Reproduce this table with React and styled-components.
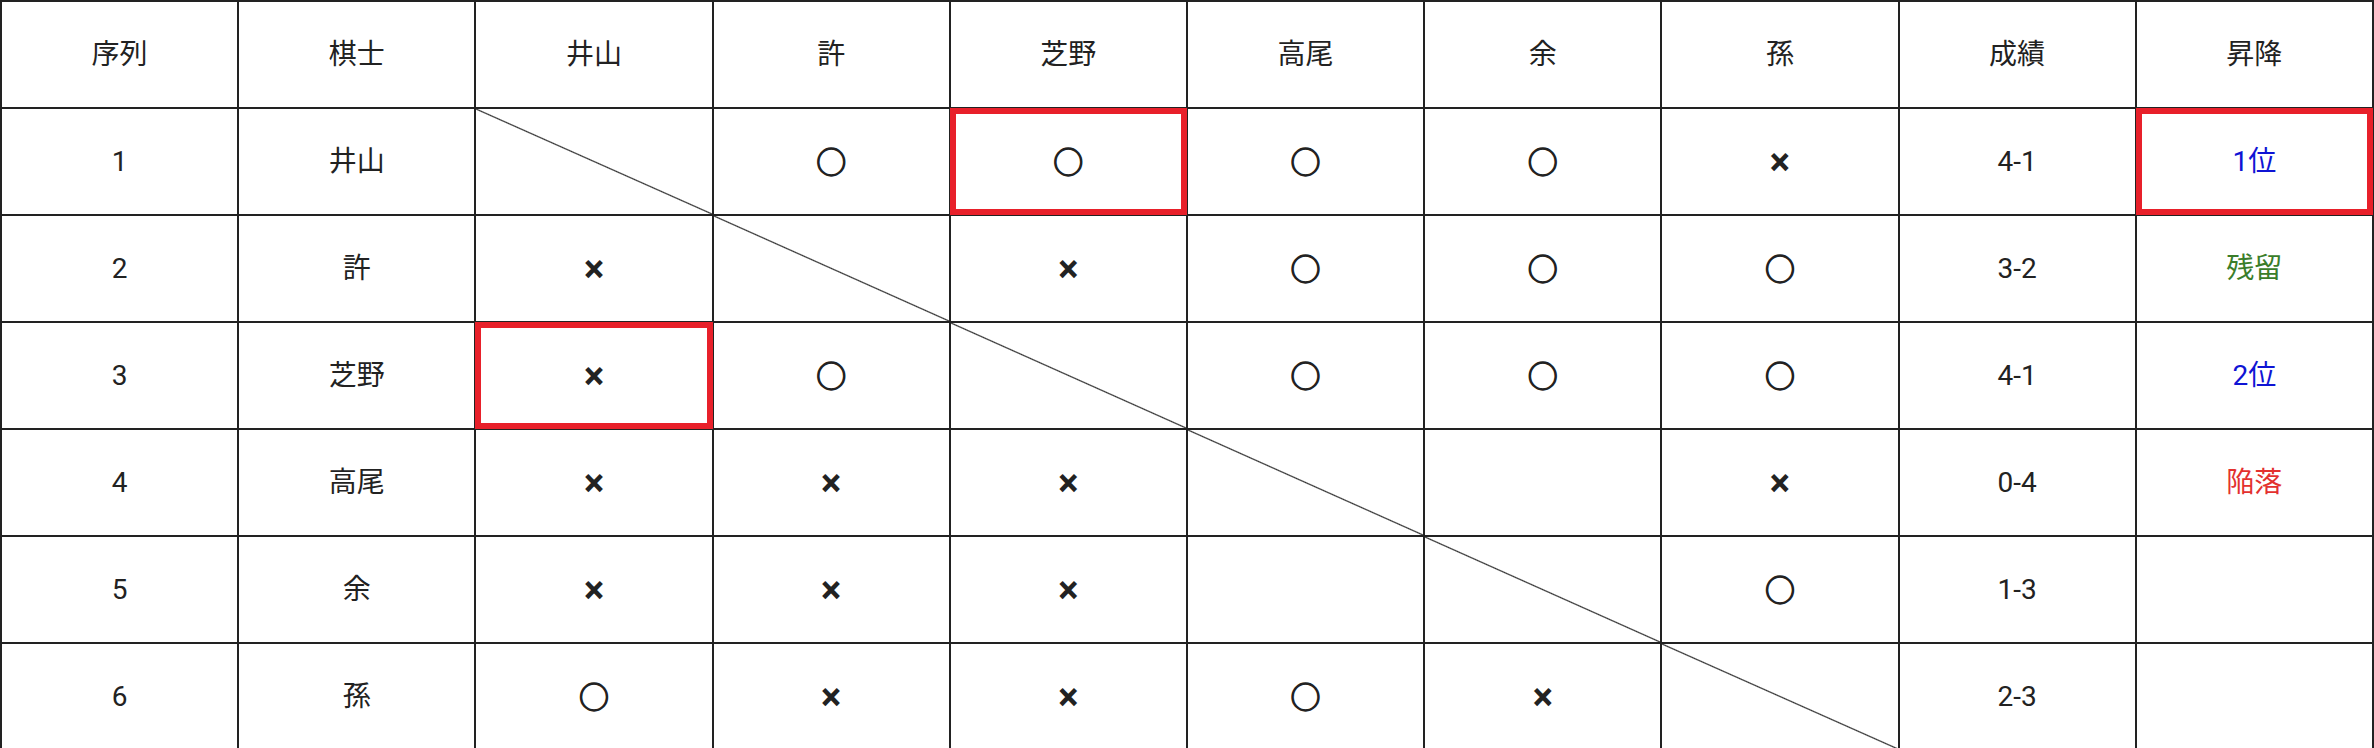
import React from "react";
import styled, { createGlobalStyle, css } from "styled-components";

const GlobalStyle = createGlobalStyle`
  html, body {
    margin: 0;
    padding: 0;
    background: #fff;
  }
  body {
    font-family: Roboto, "Noto Sans CJK JP", "Noto Sans CJK SC", sans-serif;
    color: #222;
  }
`;

const COLORS = {
  blue: "#0f14d4",
  green: "#3a7d2a",
  red: "#e3312f",
};

const players = ["井山", "許", "芝野", "高尾", "余", "孫"];

// each row: results vs players, score, status
const rows = [
  { results: ["", "○", "○", "○", "○", "×"], score: "4-1", status: "1位", tone: "blue" },
  { results: ["×", "", "×", "○", "○", "○"], score: "3-2", status: "残留", tone: "green" },
  { results: ["×", "○", "", "○", "○", "○"], score: "4-1", status: "2位", tone: "blue" },
  { results: ["×", "×", "×", "", "", "×"], score: "0-4", status: "陥落", tone: "red" },
  { results: ["×", "×", "×", "", "", "○"], score: "1-3", status: "" },
  { results: ["○", "×", "×", "○", "×", ""], score: "2-3", status: "" },
];

// cells outlined in red: [row, col] with col counted over the whole row
const marked = ["0-4", "0-9", "2-2"];

const Table = styled.table`
  width: 100%;
  border-collapse: collapse;
  table-layout: fixed;
  font-size: 28px;
`;

const Row = styled.tr`
  height: 107px;
`;

const cellBase = css`
  position: relative;
  border: 2px solid #222;
  padding: 0;
  text-align: center;
  vertical-align: middle;
  font-weight: 400;
  line-height: 1;
`;

const Th = styled.th`
  ${cellBase}
`;

const Td = styled.td`
  ${cellBase}
  color: ${(p) => (p.$tone ? COLORS[p.$tone] : "#222")};

  ${(p) =>
    p.$diagonal &&
    css`
      background: linear-gradient(
        to top right,
        transparent calc(50% - 1.2px),
        #333 50%,
        transparent calc(50% + 1.2px)
      );
    `}

  ${(p) =>
    p.$marked &&
    css`
      &::after {
        content: "";
        position: absolute;
        inset: -1px;
        border: 6px solid #e8202a;
        pointer-events: none;
      }
    `}
`;

const Mark = styled.span`
  ${(p) =>
    p.$kind === "×"
      ? css`
          font-family: Roboto, sans-serif;
          font-size: 38px;
          font-weight: 700;
        `
      : css`
          font-family: "Noto Sans CJK JP", sans-serif;
          font-size: 30px;
          -webkit-text-stroke: 1.3px #222;
        `}
`;

export default function App() {
  return (
    <>
      <GlobalStyle />
      <Table>
        <thead>
          <Row>
            <Th>序列</Th>
            <Th>棋士</Th>
            {players.map((name) => (
              <Th key={name}>{name}</Th>
            ))}
            <Th>成績</Th>
            <Th>昇降</Th>
          </Row>
        </thead>
        <tbody>
          {rows.map((row, i) => (
            <Row key={i}>
              <Td>{i + 1}</Td>
              <Td>{players[i]}</Td>
              {row.results.map((r, j) => (
                <Td
                  key={j}
                  $diagonal={i === j}
                  $marked={marked.includes(`${i}-${j + 2}`)}
                >
                  {r && <Mark $kind={r}>{r}</Mark>}
                </Td>
              ))}
              <Td>{row.score}</Td>
              <Td $tone={row.tone} $marked={marked.includes(`${i}-9`)}>
                {row.status}
              </Td>
            </Row>
          ))}
        </tbody>
      </Table>
    </>
  );
}
